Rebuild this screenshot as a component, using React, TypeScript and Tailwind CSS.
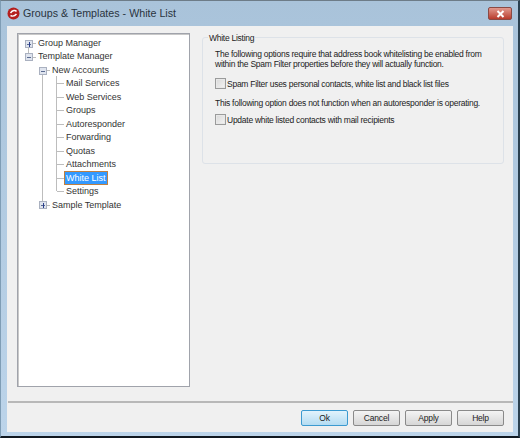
import React from 'react';

const font = { fontFamily: '"Liberation Sans", Arial, sans-serif' };

interface Node {
  label: string;
  level: number;
  selected?: boolean;
}

const nodes: Node[] = [
  { label: 'Group Manager', level: 0 },
  { label: 'Template Manager', level: 0 },
  { label: 'New Accounts', level: 1 },
  { label: 'Mail Services', level: 2 },
  { label: 'Web Services', level: 2 },
  { label: 'Groups', level: 2 },
  { label: 'Autoresponder', level: 2 },
  { label: 'Forwarding', level: 2 },
  { label: 'Quotas', level: 2 },
  { label: 'Attachments', level: 2 },
  { label: 'White List', level: 2, selected: true },
  { label: 'Settings', level: 2 },
  { label: 'Sample Template', level: 1 },
];

const Expander = ({ x, y, open }: { x: number; y: number; open: boolean }) => (
  <g>
    <rect x={x + 0.5} y={y + 0.5} width="7" height="7" fill="#dfe4ee" stroke="#aab1c0" />
    <path d={`M${x + 2} ${y + 4.5}H${x + 6}`} stroke="#5a6a90" />
    {!open && <path d={`M${x + 4.5} ${y + 2}V${y + 7}`} stroke="#2b3f8f" />}
  </g>
);

const TreeLines = () => (
  <svg className="absolute left-0 top-0" width="170" height="200" fill="none" stroke="#bdbdbd" shapeRendering="crispEdges">
    <path d="M10.5 8V23M10.5 23H18M10.5 9.5H18M24.5 36V171M24.5 36H32M24.5 171H32M38.5 42V157" />
    <path d="M38.5 49.5H46M38.5 63H46M38.5 76.5H46M38.5 90H46M38.5 103.5H46M38.5 117H46M38.5 130.5H46M38.5 144H46M38.5 157H46" />
    <Expander x={7} y={6} open={false} />
    <Expander x={7} y={19} open />
    <Expander x={21} y={33} open />
    <Expander x={21} y={167} open={false} />
  </svg>
);

const Checkbox = () => (
  <span className="w-[11px] h-[11px] shrink-0 border border-[#9a9b9b] bg-gradient-to-br from-[#d8d8d8] to-[#f4f4f4] shadow-[inset_0_0_0_1px_#e8e8e8]" />
);

const Btn = ({ label, primary }: { label: string; primary?: boolean }) => (
  <button
    className={`w-[47px] h-[16px] rounded-[2px] border text-[8.5px] tracking-[-0.2px] leading-none text-[#222] ${
      primary
        ? 'border-[#3c9ad0] bg-gradient-to-b from-[#e2f3fc] to-[#b4dcf2]'
        : 'border-[#8a8a8a] bg-gradient-to-b from-[#f4f4f4] to-[#d6d6d6]'
    }`}
  >
    {label}
  </button>
);

export default function App() {
  return (
    <div style={font} className="w-[520px] h-[438px] flex flex-col overflow-hidden bg-gradient-to-b from-[#a9c3da] to-[#bcd4ea] border-b-2 border-b-[#101820] border-r-2 border-r-[#2a4050] border-l border-l-[#7f9db5] border-t border-t-[#6d7c88]">
      {/* Title bar */}
      <div className="h-[25px] shrink-0 flex items-center pl-[6px] pr-[6px]">
        <svg width="13" height="13" viewBox="0 0 13 13" className="shrink-0">
          <circle cx="6.5" cy="6.5" r="6" fill="#b5201f" />
          <path d="M3.5 6c2-3 5-3 6-1.5M3.5 8.5c2 1 4 1 6-1.5" stroke="#fff" strokeWidth="1.4" fill="none" />
        </svg>
        <span className="ml-[3px] text-[10.7px] text-[#2a3440]">Groups &amp; Templates - White List</span>
        <span className="ml-auto w-[24px] h-[13px] rounded-[2px] border border-[#8a4a44] bg-gradient-to-b from-[#e0988e] to-[#b83a2c] flex items-center justify-center">
          <svg width="9" height="8" viewBox="0 0 9 8">
            <path d="M1.5 1l6 6M7.5 1l-6 6" stroke="#fff" strokeWidth="2" />
          </svg>
        </span>
      </div>

      {/* Client area */}
      <div className="flex-1 ml-[6px] mr-[5px] mb-[4px] bg-[#f0f0f0] flex flex-col text-[#222]">
        <div className="flex-1 flex pt-[7px] pl-[10px] pr-[9px]">
          <div className="w-[173px] h-[354px] shrink-0 border border-[#a0a3ab] shadow-[inset_1px_1px_0_#c8c8c8] bg-white relative pt-[2px]">
            <TreeLines />
            <div className="relative">
              {nodes.map(n => (
                <div key={n.label} className={`h-[13.5px] flex items-center text-[9px] ${
                  n.level === 0 ? 'pl-[19px]' : n.level === 1 ? 'pl-[33px]' : 'pl-[47px]'
                }`}>
                  <span className={`px-[1px] leading-[12px] whitespace-nowrap ${
                    n.selected ? 'bg-[#3399ff] text-white outline outline-1 outline-[#c08040]' : 'text-[#333]'
                  }`}>
                    {n.label}
                  </span>
                </div>
              ))}
            </div>
          </div>

          <div className="flex-1 ml-[12px] pt-[4px]">
            <div className="relative h-[127px] rounded-[3px] border border-[#dde2e8] pt-[11px] pl-[12px] pr-[6px] text-[8.5px] tracking-[-0.26px] leading-[10px] whitespace-nowrap">
              <span className="absolute -top-[5px] left-[5px] bg-[#f0f0f0] px-[1px]">White Listing</span>
              <p>The following options require that address book whitelisting be enabled from<br />within the Spam Filter properties before they will actually function.</p>
              <label className="flex items-center mt-[9px] gap-[1px]">
                <Checkbox />
                <span>Spam Filter uses personal contacts, white list and black list files</span>
              </label>
              <p className="mt-[9px]">This following option does not function when an autoresponder is operating.</p>
              <label className="flex items-center mt-[6px] gap-[1px]">
                <Checkbox />
                <span>Update white listed contacts with mail recipients</span>
              </label>
            </div>
          </div>
        </div>

        <div className="h-[25px] ml-[1px] mb-[6px] border-t-2 border-t-[#b8b8b8] flex items-end justify-end gap-[5px] pr-[9px]">
          <Btn label="Ok" primary />
          <Btn label="Cancel" />
          <Btn label="Apply" />
          <Btn label="Help" />
        </div>
      </div>
    </div>
  );
}
